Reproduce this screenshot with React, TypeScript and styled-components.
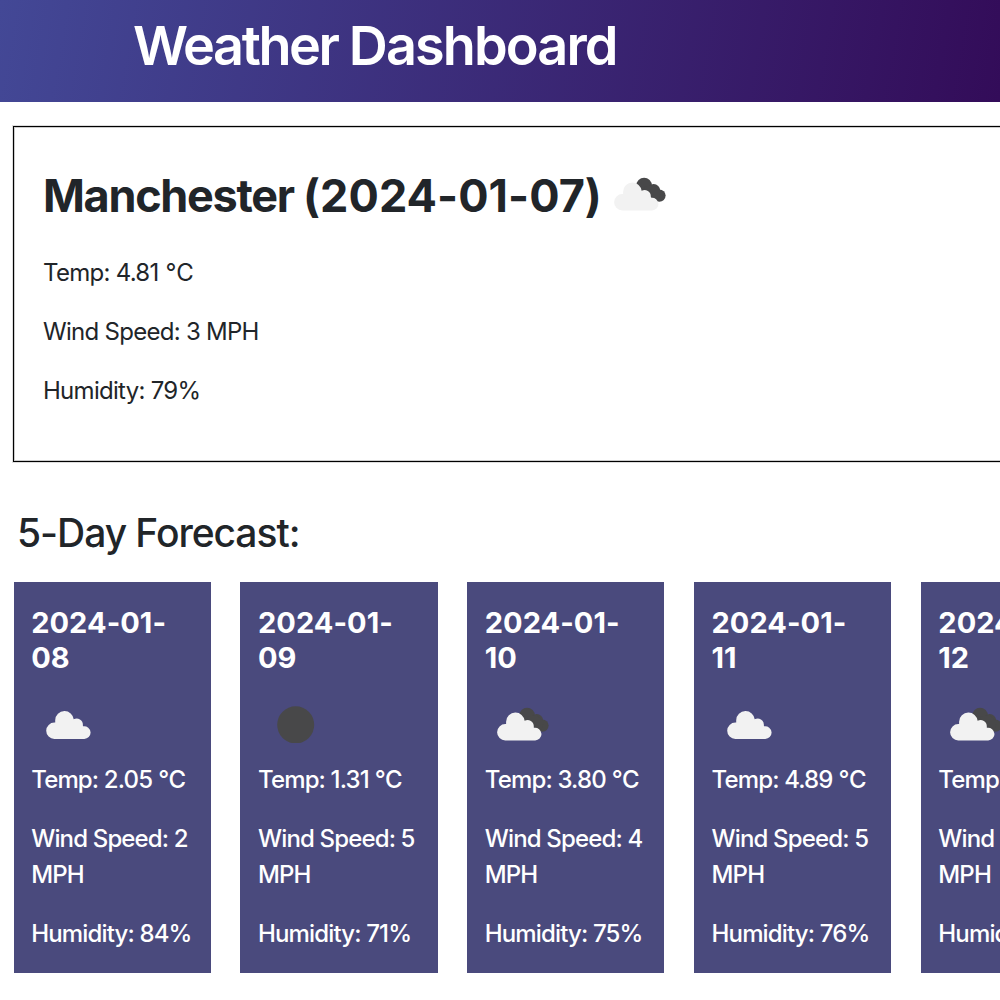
import React from "react";
import styled, { createGlobalStyle } from "styled-components";

const Global = createGlobalStyle`
  *, *::before, *::after { box-sizing: border-box; }
  html, body { margin: 0; overflow: hidden; background: #fff; }
  body { font-family: Inter, "Liberation Sans", sans-serif; font-size: 24px; line-height: 36px; letter-spacing: -0.72px; color: #212529; }
`;

const Page = styled.div`
  width: 1000px;
  height: 1000px;
  overflow: hidden;
`;

const Header = styled.header`
  height: 102px;
  padding: 14px 0 0 133px;
  color: #fff;
  background: linear-gradient(100deg, #434896 0%, #330c59 100%);
`;

const Title = styled.h1`
  margin: 0;
  font-size: 54px;
  font-weight: 600;
  line-height: 64px;
  letter-spacing: -2.4px;
  white-space: nowrap;
`;

const Tracked = styled.span<{ $spacing: number }>`
  letter-spacing: ${(p) => p.$spacing}px;
`;

const Today = styled.section`
  width: 1100px;
  height: 336px;
  margin: 24px 0 0 13px;
  padding: 40px 29px;
  border: 1px solid #000;
  box-shadow: 0 0 0 1px #ddd, inset 0 0 0 1px #ccc;
`;

const CityRow = styled.div`
  display: flex;
  align-items: center;
  height: 58px;
  gap: 11px;
`;

const City = styled.h2`
  margin: 0;
  font-size: 45px;
  font-weight: 700;
  line-height: 54px;
  letter-spacing: -1.3px;
  white-space: nowrap;
`;

const Reading = styled.p`
  margin: 0 0 23px;
`;

const Readings = styled.div`
  padding-top: 30px;
`;

const ForecastTitle = styled.h3`
  margin: 47px 0 25px 17px;
  font-size: 39px;
  font-weight: 550;
  line-height: 48px;
  letter-spacing: -1.05px;
`;

const Forecast = styled.div`
  display: flex;
  gap: 29.6px;
  padding-left: 13.6px;
`;

const Card = styled.article`
  flex: 0 0 197.2px;
  height: 391px;
  padding: 23px 16px 0 17.6px;
  color: #fff;
  background: #4a4a7d;
  font-weight: 450;
  letter-spacing: -0.85px;
`;

const Day = styled.h4`
  width: 150px;
  margin: 0;
  font-size: 29px;
  font-weight: 700;
  line-height: 35px;
  letter-spacing: 0.05px;
`;

const Icon = styled.svg`
  display: block;
  flex: none;
`;

const CityIcon = styled(Icon)`
  margin-bottom: 3px;
`;

const CardIcon = styled(Icon)`
  margin: 18px 0 19px;
`;

type Sky = "cloud" | "broken" | "clear";

const LIGHT_CLOUD =
  "M8.6 28a8.2 8.2 0 0 1-8.3-8.2 8.2 8.2 0 0 1 8.3-8.1h.7V9.4A9.2 9.2 0 0 1 18.6 .2a9.2 9.2 0 0 1 9.2 8.2a6.2 6.2 0 0 1 9.2 5.6v1.4a6.5 6.5 0 0 1 7.7 6.3 6.3 6.3 0 0 1-6.4 6.3z";

function SkyIcon({ sky }: { sky: Sky }) {
  if (sky === "clear") return <circle cx="37.7" cy="31.8" r="18.5" fill="#484849" />;
  const left = sky === "broken" ? 11.8 : 14.9;
  const top = sky === "broken" ? 19.4 : 17.9;
  return (
    <g transform={`translate(${left} ${top})`}>
      {sky === "broken" && (
        <g fill="#484849">
          <circle cx="30.3" cy="3.2" r="7.8" />
          <circle cx="39.8" cy="8.2" r="6.6" />
          <circle cx="45.6" cy="13.2" r="6.2" />
          <path d="M30 4L40 3L47 9L44 19L37 15Z" />
        </g>
      )}
      <path d={LIGHT_CLOUD} fill="#f2f2f2" />
    </g>
  );
}

const days: { date: string; sky: Sky; temp: string; wind: number; humidity: number }[] = [
  { date: "2024-01-08", sky: "cloud", temp: "2.05", wind: 2, humidity: 84 },
  { date: "2024-01-09", sky: "clear", temp: "1.31", wind: 5, humidity: 71 },
  { date: "2024-01-10", sky: "broken", temp: "3.80", wind: 4, humidity: 75 },
  { date: "2024-01-11", sky: "cloud", temp: "4.89", wind: 5, humidity: 76 },
  { date: "2024-01-12", sky: "broken", temp: "4.10", wind: 4, humidity: 78 },
];

export default function App() {
  return (
    <Page>
      <Global />
      <Header>
        <Title>
          Weather <Tracked $spacing={-1.9}>Dashboard</Tracked>
        </Title>
      </Header>
      <Today>
        <CityRow>
          <City>
            Manchester <Tracked $spacing={0.05}>(2024-01-07)</Tracked>
          </City>
          <CityIcon width="54" height="40" viewBox="11 12 54 40">
            <SkyIcon sky="broken" />
          </CityIcon>
        </CityRow>
        <Readings>
          <Reading>Temp: 4.81<Tracked $spacing={0.2}> °C</Tracked></Reading>
          <Reading>Wind Speed: 3 MPH</Reading>
          <Reading>Humidity: 79%</Reading>
        </Readings>
      </Today>
      <ForecastTitle>5-Day Forecast:</ForecastTitle>
      <Forecast>
        {days.map((d) => (
          <Card key={d.date}>
            <Day>{d.date}</Day>
            <CardIcon width="72" height="50" viewBox="0 0 72 50">
              <SkyIcon sky={d.sky} />
            </CardIcon>
            <Reading>Temp: {d.temp}<Tracked $spacing={-0.4}> °C</Tracked></Reading>
            <Reading>Wind Speed: {d.wind} MPH</Reading>
            <Reading>Humidity: {d.humidity}%</Reading>
          </Card>
        ))}
      </Forecast>
    </Page>
  );
}
